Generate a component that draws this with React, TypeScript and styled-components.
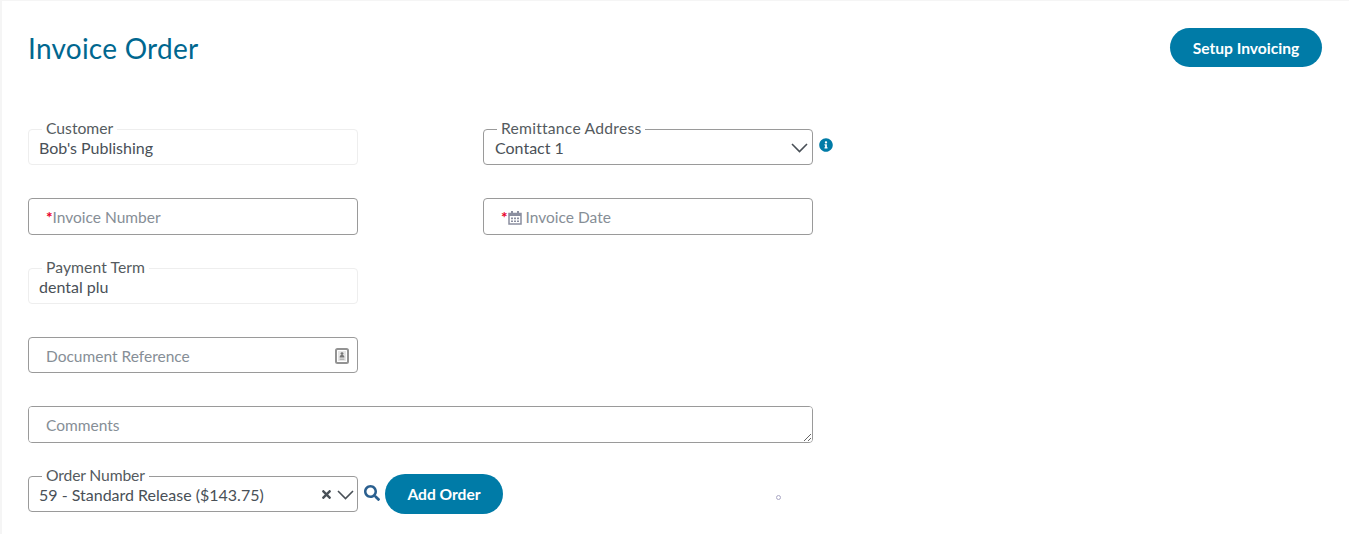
import React from 'react';
import styled, { createGlobalStyle } from 'styled-components';
import { FaInfoCircle, FaSearch, FaTimes } from 'react-icons/fa';

const Global = createGlobalStyle`
  html, body { margin: 0; padding: 0; background: #f5f5f5; }
  body { font-family: Lato, "Noto Sans", sans-serif; font-size: 16px; color: #495057; }
`;

const Page = styled.main`
  box-sizing: border-box;
  margin: 1px 0 0 2px;
  height: 533px;
  background: #fff;
  padding: 27px 27px 0 26px;
  overflow: hidden;
`;

const Header = styled.header`
  display: flex;
  justify-content: space-between;
  align-items: center;
  height: 39px;
  margin-bottom: 62px;
`;

const Title = styled.h1`
  margin: 0;
  font-size: 28px;
  font-weight: 400;
  letter-spacing: 0.25px;
  color: #00678f;
`;

const PillButton = styled.button<{ $width: number; $height: number }>`
  width: ${p => p.$width}px;
  height: ${p => p.$height}px;
  flex: none;
  border: 0;
  padding: 0;
  border-radius: 20px;
  background: #007ba7;
  color: #fff;
  font: 700 15.6px Lato, "Noto Sans", sans-serif;
`;

const Form = styled.form`
  display: flex;
  flex-direction: column;
  gap: 33px;
`;

const Row = styled.div`
  display: flex;
  align-items: flex-start;
`;

const Field = styled.div<{ $muted?: boolean; $tall?: boolean; $offset?: boolean }>`
  position: relative;
  box-sizing: border-box;
  flex: none;
  display: flex;
  align-items: center;
  width: 330px;
  height: ${p => (p.$tall ? 37 : 36)}px;
  margin-left: ${p => (p.$offset ? 125 : 0)}px;
  padding: 1px 10px 0;
  border: 1px solid ${p => (p.$muted ? '#eeeeee' : '#9a9a9a')};
  border-radius: 4px;
  background: #fff;
`;

const FloatLabel = styled.span<{ $tracking?: number }>`
  position: absolute;
  top: -11px;
  left: 13px;
  padding: 0 4px;
  background: #fff;
  font-size: 15.7px;
  line-height: 18px;
  letter-spacing: ${p => p.$tracking ?? 0}px;
  color: #555b60;
  white-space: nowrap;
`;

const Value = styled.span<{ $inset?: number }>`
  flex: 1;
  margin-left: ${p => p.$inset ?? 0}px;
  color: #495057;
  white-space: nowrap;
`;

const Placeholder = styled.span`
  display: flex;
  align-items: center;
  flex: 1;
  margin-left: 7px;
  color: #868e96;
  font-size: 15.5px;
  white-space: nowrap;
`;

const Required = styled.span`
  color: #e8002a;
  font-weight: 700;
`;

const IconWrap = styled.span<{ $left?: number; $right?: number; $shift?: number }>`
  display: inline-flex;
  margin: 0 ${p => p.$right ?? 0}px 0 ${p => p.$left ?? 0}px;
  transform: translateX(${p => p.$shift ?? 0}px);
`;

const Comments = styled.textarea`
  box-sizing: border-box;
  display: block;
  width: 785px;
  height: 37px;
  padding: 9px 17px;
  border: 1px solid #9a9a9a;
  border-radius: 4px;
  outline: 0;
  font: 400 15.5px Lato, "Noto Sans", sans-serif;
  color: #495057;
  &::placeholder { color: #868e96; opacity: 1; }
`;

const Side = styled.span<{ $left: number; $top: number }>`
  display: inline-flex;
  flex: none;
  margin: ${p => p.$top}px 0 0 ${p => p.$left}px;
`;

const Dot = styled.span`
  flex: none;
  box-sizing: border-box;
  width: 5px;
  height: 5px;
  margin: 19px 0 0 273px;
  border: 1px solid #aaa8c4;
  border-radius: 50%;
`;

const Chevron = ({ right = -6 }: { right?: number }) => (
  <svg width="17" height="10" viewBox="0 0 17 10" style={{ marginRight: right, flex: 'none' }} aria-hidden="true">
    <polyline points="1,1 8.5,8.5 16,1" fill="none" stroke="#495057" strokeWidth="1.6" />
  </svg>
);

const CalendarIcon = () => (
  <svg width="14" height="15" viewBox="0 0 14 15" aria-hidden="true">
    <path d="M1 3.5h12v10.5H1z" fill="none" stroke="#8b8fa0" strokeWidth="1.5" />
    <path d="M1 3h12v3H1zM3 1h2v3H3zM9 1h2v3H9z" fill="#8b8fa0" />
    <path d="M3 7.6h2v1.6H3zM6 7.6h2v1.6H6zM9 7.6h2v1.6H9zM3 10.4h2V12H3zM6 10.4h2V12H6zM9 10.4h2V12H9z" fill="#8b8fa0" />
  </svg>
);

const DocIcon = () => (
  <svg width="14" height="16" viewBox="0 0 14 16" aria-hidden="true">
    <rect x="1" y="1" width="12" height="14" rx="1.5" fill="#fff" stroke="#939393" strokeWidth="2" />
    <rect x="3" y="3" width="8" height="10" fill="#e6e6e6" />
    <circle cx="7" cy="5.6" r="1.4" fill="#777" />
    <path d="M4.6 9.6c0-2 1-2.6 2.4-2.6s2.4.6 2.4 2.6z" fill="#777" />
    <rect x="4.6" y="10.6" width="4.8" height="1.2" fill="#aaa" />
  </svg>
);

export default function App() {
  return (
    <>
      <Global />
      <Page>
        <Header>
          <Title>Invoice Order</Title>
          <PillButton type="button" $width={152} $height={39}>Setup Invoicing</PillButton>
        </Header>
        <Form>
          <Row>
            <Field $muted>
              <FloatLabel>Customer</FloatLabel>
              <Value>Bob's Publishing</Value>
            </Field>
            <Field $offset>
              <FloatLabel $tracking={0.22}>Remittance Address</FloatLabel>
              <Value $inset={1}>Contact 1</Value>
              <Chevron />
            </Field>
            <Side $left={6} $top={9}><FaInfoCircle size={14} color="#007ba7" /></Side>
          </Row>
          <Row>
            <Field $tall>
              <Placeholder><Required>*</Required>Invoice Number</Placeholder>
            </Field>
            <Field $tall $offset>
              <Placeholder>
                <Required>*</Required>
                <IconWrap $right={4}><CalendarIcon /></IconWrap>
                Invoice Date
              </Placeholder>
            </Field>
          </Row>
          <Row>
            <Field $muted>
              <FloatLabel $tracking={0.08}>Payment Term</FloatLabel>
              <Value>dental plu</Value>
            </Field>
          </Row>
          <Row>
            <Field>
              <Placeholder>Document Reference</Placeholder>
              <IconWrap $shift={2}><DocIcon /></IconWrap>
            </Field>
          </Row>
          <Comments placeholder="Comments" />
          <Row>
            <Field>
              <FloatLabel $tracking={-0.15}>Order Number</FloatLabel>
              <Value>59 - Standard Release ($143.75)</Value>
              <IconWrap $right={4}><FaTimes size={13} color="#495057" /></IconWrap>
              <Chevron right={-7} />
            </Field>
            <Side $left={6} $top={9}><FaSearch size={16} color="#2a5f8f" /></Side>
            <Side $left={5} $top={-2}>
              <PillButton type="button" $width={118} $height={40}>Add Order</PillButton>
            </Side>
            <Dot />
          </Row>
        </Form>
      </Page>
    </>
  );
}
